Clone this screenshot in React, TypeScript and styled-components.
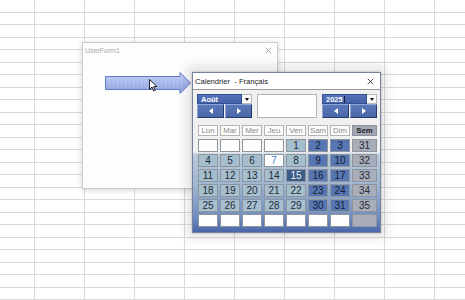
import React from 'react';
import styled, { createGlobalStyle } from 'styled-components';

const Global = createGlobalStyle`
  html, body { margin: 0; padding: 0; background: #ffffff; }
  body { font-family: "Liberation Sans", Arial, sans-serif; }
`;

const Sheet = styled.div`
  position: relative;
  width: 465px;
  height: 300px;
  overflow: hidden;
  background-color: #ffffff;
  background-image:
    linear-gradient(to right, #dadada 0 1px, transparent 1px),
    linear-gradient(to bottom, #dadada 0 1px, transparent 1px 12px, #dadada 12px 13px, transparent 13px);
  background-size: 50px 100%, 100% 25px;
  background-position: 34px 0, 0 12px;
`;

const FormWindow = styled.div`
  position: absolute;
  left: 82px;
  top: 42px;
  width: 194px;
  height: 145px;
  background: #fdfdfd;
  border: 1px solid #cdcdcd;
  box-shadow: 0 1px 6px rgba(0, 0, 0, 0.18);
  display: flex;
  flex-direction: column;
`;

const FormTitle = styled.div`
  height: 14px;
  display: flex;
  align-items: center;
  justify-content: space-between;
  padding: 0 5px 0 2px;
  font-size: 7px;
  color: #a9a9a9;
`;

const Arrow = styled.svg`
  position: absolute;
  left: 105px;
  top: 72px;
`;

const Cursor = styled.svg`
  position: absolute;
  left: 149px;
  top: 79px;
`;

const CalWindow = styled.div`
  position: absolute;
  left: 192px;
  top: 72px;
  width: 187px;
  height: 159px;
  border: 1px solid #76829a;
  background: #ffffff;
  box-shadow: 0 0 10px 6px rgba(0, 0, 0, 0.1), 0 0 2px rgba(0, 0, 0, 0.25);
  display: flex;
  flex-direction: column;
`;

const CalTitle = styled.div`
  height: 16px;
  flex: none;
  display: flex;
  align-items: center;
  justify-content: space-between;
  padding: 0 6px 0 2px;
  border-bottom: 1px solid #9a9a9a;
  font-size: 7.6px;
  color: #1a1a1a;
  background: #ffffff;
`;

const CalBody = styled.div`
  flex: 1;
  display: flex;
  flex-direction: column;
  padding: 4px 3px 0 4px;
  background: linear-gradient(
    to bottom,
    #f0f0f0 0px,
    #f0f0f0 62px,
    #b9cadc 65px,
    #9fb5d0 95px,
    #6d8bc0 128px,
    #4a68a9 142px
  );
`;

const Header = styled.div`
  height: 24px;
  display: flex;
  justify-content: space-between;
  align-items: stretch;
`;

const Group = styled.div`
  width: 55px;
  display: flex;
  flex-direction: column;
`;

const ComboRow = styled.div`
  height: 10px;
  display: flex;
`;

const Combo = styled.div`
  flex: 1;
  display: flex;
  align-items: center;
  padding-left: 3px;
  background: linear-gradient(to bottom, #5472b8, #4562a8);
  border: 1px solid #34508e;
  color: #ffffff;
  font-weight: bold;
  font-size: 7.5px;
`;

const Caret = styled.span`
  display: inline-block;
  width: 1px;
  height: 7px;
  margin-left: 1px;
  background: #10203c;
`;

const DropBtn = styled.div`
  width: 9px;
  display: flex;
  align-items: center;
  justify-content: center;
  background: #fbfbfb;
  border: 1px solid #b8b8b8;
  border-left: none;
  &::after {
    content: '';
    border-left: 2.5px solid transparent;
    border-right: 2.5px solid transparent;
    border-top: 3px solid #111111;
  }
`;

const NavRow = styled.div`
  height: 14px;
  display: flex;
  gap: 1px;
`;

const NavBtn = styled.div<{ $dir: 'left' | 'right' }>`
  flex: 1;
  display: flex;
  align-items: center;
  justify-content: center;
  background: linear-gradient(to bottom, #5b79ba, #4a67a8);
  border-top: 1px solid #8fa5d6;
  border-left: 1px solid #8fa5d6;
  border-right: 1px solid #263a6c;
  border-bottom: 1px solid #263a6c;
  &::after {
    content: '';
    border-top: 3.5px solid transparent;
    border-bottom: 3.5px solid transparent;
    ${(p) => (p.$dir === 'left' ? 'border-right: 4px solid #ffffff;' : 'border-left: 4px solid #ffffff;')}
  }
`;

const TextBox = styled.div`
  width: 58px;
  background: #ffffff;
  border: 1px solid #b5b5b5;
`;

const DayHead = styled.div`
  margin-top: 7px;
  margin-left: 1px;
  display: grid;
  grid-template-columns: repeat(7, 20px) 25px;
  column-gap: 2px;
  height: 10px;
`;

const HeadCell = styled.div<{ $sem?: boolean }>`
  display: flex;
  align-items: center;
  justify-content: center;
  background: ${(p) => (p.$sem ? '#a4a8b4' : '#fcfcfc')};
  border: 1px solid ${(p) => (p.$sem ? '#8c909a' : '#b4b4b4')};
  color: ${(p) => (p.$sem ? '#1d1f26' : '#8a8a8a')};
  font-weight: ${(p) => (p.$sem ? 'bold' : 'normal')};
  font-size: 7.8px;
`;

const Grid = styled.div`
  margin-top: 4px;
  margin-left: 1px;
  display: grid;
  grid-template-columns: repeat(7, 20px) 25px;
  grid-auto-rows: 13px;
  column-gap: 2px;
  row-gap: 2px;
`;

type Kind = 'empty' | 'day' | 'weekend' | 'today' | 'current' | 'week';

const palette: Record<Kind, { bg: string; fg: string }> = {
  empty: { bg: '#fdfdfd', fg: '#333333' },
  day: { bg: '#a6bfcf', fg: '#232b36' },
  weekend: { bg: '#5776b2', fg: '#141f38' },
  today: { bg: '#3e5c88', fg: '#e4ebf4' },
  current: { bg: '#fdfdfd', fg: '#3a7ce2' },
  week: { bg: '#a9adba', fg: '#262b36' },
};

const Cell = styled.div<{ $kind: Kind }>`
  display: flex;
  align-items: center;
  justify-content: center;
  background: ${(p) => palette[p.$kind].bg};
  color: ${(p) => palette[p.$kind].fg};
  border: 1px solid #8e959c;
  font-size: 10px;
  line-height: 1;
`;

const heads = ['Lun', 'Mar', 'Mer', 'Jeu', 'Ven', 'Sam', 'Dim'];

const weeks: { n: number | null; days: (number | null)[] }[] = [
  { n: 31, days: [null, null, null, null, 1, 2, 3] },
  { n: 32, days: [4, 5, 6, 7, 8, 9, 10] },
  { n: 33, days: [11, 12, 13, 14, 15, 16, 17] },
  { n: 34, days: [18, 19, 20, 21, 22, 23, 24] },
  { n: 35, days: [25, 26, 27, 28, 29, 30, 31] },
  { n: null, days: [null, null, null, null, null, null, null] },
];

function kindOf(d: number | null, i: number): Kind {
  if (d === null) return 'empty';
  if (d === 7) return 'current';
  if (d === 15) return 'today';
  if (i >= 5) return 'weekend';
  return 'day';
}

const CloseX = ({ color, size }: { color: string; size: number }) => (
  <svg width={size} height={size} viewBox="0 0 10 10">
    <path d="M1 1 L9 9 M9 1 L1 9" stroke={color} strokeWidth="1.2" fill="none" />
  </svg>
);

export default function App() {
  return (
    <>
      <Global />
      <Sheet>
        <FormWindow>
          <FormTitle>
            <span>UserForm1</span>
            <CloseX color="#9a9a9a" size={7} />
          </FormTitle>
        </FormWindow>

        <Arrow width="87" height="23" viewBox="0 0 87 23">
          <defs>
            <linearGradient id="ag" x1="0" y1="0" x2="0" y2="1">
              <stop offset="0" stopColor="#c6d1f3" />
              <stop offset="0.5" stopColor="#a9b9ec" />
              <stop offset="1" stopColor="#8fa2de" />
            </linearGradient>
            <pattern id="dots" width="4" height="3" patternUnits="userSpaceOnUse">
              <rect x="0" y="0" width="1" height="1" fill="#ffffff" opacity="0.18" />
              <rect x="2" y="1.5" width="1" height="1" fill="#6f86d0" opacity="0.15" />
            </pattern>
          </defs>
          <path d="M0.5 4.5 H75 V0.5 L85.5 11 L75 21.5 V17.5 H0.5 Z" fill="url(#ag)" />
          <path d="M0.5 4.5 H75 V0.5 L85.5 11 L75 21.5 V17.5 H0.5 Z" fill="url(#dots)" stroke="#607bc8" strokeWidth="1" />
        </Arrow>

        <Cursor width="10" height="13" viewBox="0 0 10 13">
          <path d="M0.5 0.5 L0.5 10.5 L3 8 L4.8 12 L6.3 11.3 L4.6 7.6 L8 7.6 Z" fill="#ffffff" stroke="#111111" strokeWidth="0.9" />
        </Cursor>

        <CalWindow>
          <CalTitle>
            <span>Calendrier&nbsp; - Français</span>
            <CloseX color="#222222" size={7} />
          </CalTitle>
          <CalBody>
            <Header>
              <Group>
                <ComboRow>
                  <Combo>Août</Combo>
                  <DropBtn />
                </ComboRow>
                <NavRow>
                  <NavBtn $dir="left" />
                  <NavBtn $dir="right" />
                </NavRow>
              </Group>
              <TextBox />
              <Group>
                <ComboRow>
                  <Combo>
                    2025
                    <Caret />
                  </Combo>
                  <DropBtn />
                </ComboRow>
                <NavRow>
                  <NavBtn $dir="left" />
                  <NavBtn $dir="right" />
                </NavRow>
              </Group>
            </Header>
            <DayHead>
              {heads.map((h) => (
                <HeadCell key={h}>{h}</HeadCell>
              ))}
              <HeadCell $sem>Sem</HeadCell>
            </DayHead>
            <Grid>
              {weeks.map((w, r) => (
                <React.Fragment key={r}>
                  {w.days.map((d, i) => (
                    <Cell key={i} $kind={kindOf(d, i)}>
                      {d ?? ''}
                    </Cell>
                  ))}
                  <Cell $kind="week">{w.n ?? ''}</Cell>
                </React.Fragment>
              ))}
            </Grid>
          </CalBody>
        </CalWindow>
      </Sheet>
    </>
  );
}
